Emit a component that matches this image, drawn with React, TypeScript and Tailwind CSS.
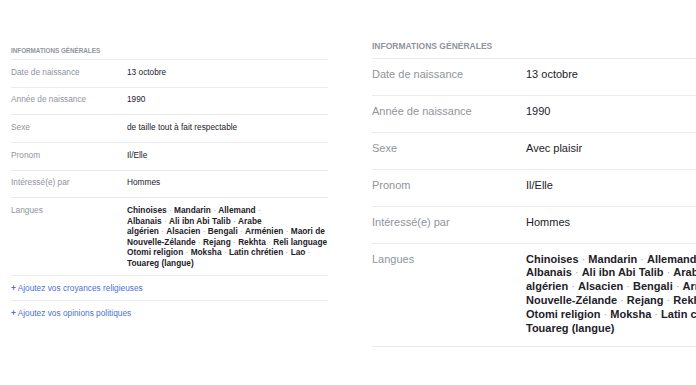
import React from "react";

type Size = "sm" | "lg";

const styles: Record<
  Size,
  {
    wrap: string;
    header: string;
    row: string;
    text: string;
    label: string;
    langRow: string;
    langText: string;
    linkRow: string;
  }
> = {
  sm: {
    wrap: "pt-[46.5px] pl-[11px] w-[328px] shrink-0",
    header: "text-[6.3px] leading-[8px] pb-[4.5px]",
    row: "pt-[6.5px] pb-[10.2px]",
    text: "text-[8.3px] leading-[10px]",
    label: "w-[116px]",
    langRow: "pt-[6.5px] pb-[6.4px]",
    langText: "text-[8.3px] leading-[10.6px]",
    linkRow: "pt-[6.7px] pb-[7.3px]",
  },
  lg: {
    wrap: "pt-[41px] ml-[44px] w-[424px] shrink-0",
    header: "text-[8.5px] leading-[11px] pb-[6px]",
    row: "pt-[8px] pb-[14px]",
    text: "text-[11px] leading-[14px]",
    label: "w-[154px]",
    langRow: "pt-[8.5px] pb-[10px]",
    langText: "text-[11px] leading-[13.9px]",
    linkRow: "pt-[9px] pb-[10px]",
  },
};

// Each entry is a line of languages; `true` adds a trailing separator after the last name.
const languageLines: [string[], boolean][] = [
  [["Chinoises", "Mandarin", "Allemand"], true],
  [["Albanais", "Ali ibn Abi Talib", "Arabe"], false],
  [["algérien", "Alsacien", "Bengali", "Arménien", "Maori de"], false],
  [["Nouvelle-Zélande", "Rejang", "Rekhta", "Reli language"], false],
  [["Otomi religion", "Moksha", "Latin chrétien", "Lao"], true],
  [["Touareg (langue)"], false],
];

function Dot() {
  return <span className="font-normal text-[#a8abb1]"> · </span>;
}

function InfoPanel({ size, sexe, links }: { size: Size; sexe: string; links: boolean }) {
  const s = styles[size];
  const rows: [string, string][] = [
    ["Date de naissance", "13 octobre"],
    ["Année de naissance", "1990"],
    ["Sexe", sexe],
    ["Pronom", "Il/Elle"],
    ["Intéressé(e) par", "Hommes"],
  ];
  return (
    <section className={s.wrap}>
      <h3 className={`${s.header} font-bold uppercase text-[#90949c]`}>Informations générales</h3>
      {rows.map(([label, value]) => (
        <div key={label} className={`flex border-t border-[#e9ebee] ${s.row} ${s.text}`}>
          <div className={`${s.label} shrink-0 text-[#90949c]`}>{label}</div>
          <div className="text-[#1d2129]">{value}</div>
        </div>
      ))}
      <div className={`flex border-y border-[#e9ebee] ${s.langRow}`}>
        <div className={`${s.label} ${s.langText} shrink-0 text-[#90949c]`}>Langues</div>
        <div className={`${s.langText} font-bold text-[#1d2129]`}>
          {languageLines.map(([items, trailing], i) => (
            <div key={i} className="whitespace-nowrap">
              {items.map((name, j) => (
                <React.Fragment key={name}>
                  {j > 0 && <Dot />}
                  {name}
                </React.Fragment>
              ))}
              {trailing && <Dot />}
            </div>
          ))}
        </div>
      </div>
      {links && (
        <>
          <div className={`${s.linkRow} ${s.text} text-[#4c70d4]`}>
            <span className="font-bold">+</span> Ajoutez vos croyances religieuses
          </div>
          <div className={`border-t border-[#e9ebee] ${s.linkRow} ${s.text} text-[#4c70d4]`}>
            <span className="font-bold">+</span> Ajoutez vos opinions politiques
          </div>
        </>
      )}
    </section>
  );
}

export default function App() {
  return (
    <div
      className="flex items-start w-[696px] h-[385px] overflow-hidden bg-white"
      style={{ fontFamily: '"Liberation Sans", Arial, Helvetica, sans-serif' }}
    >
      <InfoPanel size="sm" sexe="de taille tout à fait respectable" links />
      <InfoPanel size="lg" sexe="Avec plaisir" links={false} />
    </div>
  );
}
